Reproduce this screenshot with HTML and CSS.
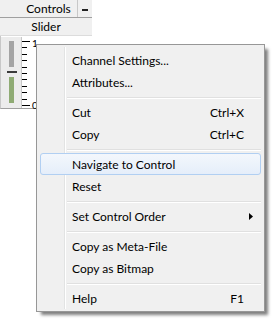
FILE: index.html
```html
<!DOCTYPE html>
<html>
<head>
<meta charset="utf-8">
<link rel="stylesheet" href="styles.css">
</head>
<body>
<div class="widget">
  <div class="titlebar">
    <div class="title">Controls</div>
    <div class="minbtn"><span class="dash"></span></div>
  </div>
  <div class="caption">Slider</div>
  <div class="body">
    <div class="track">
      <div class="bar upper"></div>
      <div class="thumb"></div>
      <div class="bar lower"></div>
    </div>
    <div class="ticks">
      <i class="long"></i><i></i><i></i><i></i><i></i><i></i><i></i><i></i><i></i><i></i><i class="long"></i>
    </div>
    <div class="labels"><span>1</span><span>0</span></div>
  </div>
</div>

<div class="menu">
  <div class="item"><span class="label">Channel Settings...</span></div>
  <div class="item"><span class="label">Attributes...</span></div>
  <div class="sep"></div>
  <div class="item"><span class="label">Cut</span><span class="key">Ctrl+X</span></div>
  <div class="item"><span class="label">Copy</span><span class="key">Ctrl+C</span></div>
  <div class="sep"></div>
  <div class="item hot"><span class="label">Navigate to Control</span></div>
  <div class="item"><span class="label">Reset</span></div>
  <div class="sep"></div>
  <div class="item"><span class="label">Set Control Order</span><span class="sub"><svg width="4" height="7" viewBox="0 0 4 7"><polygon points="0,0 4,3.5 0,7" fill="#000"/></svg></span></div>
  <div class="sep"></div>
  <div class="item"><span class="label">Copy as Meta-File</span></div>
  <div class="item"><span class="label">Copy as Bitmap</span></div>
  <div class="sep"></div>
  <div class="item"><span class="label">Help</span><span class="key">F1</span></div>
</div>
</body>
</html>
```

FILE: styles.css
```css
* { box-sizing: border-box; }
html, body { margin: 0; padding: 0; background: #fff; }
body {
  width: 273px;
  height: 320px;
  overflow: hidden;
  position: relative;
  font-family: Lato, "Liberation Sans", sans-serif;
  font-size: 12px;
  color: #000;
}

.widget { width: 92px; display: flex; flex-direction: column; }

.titlebar {
  display: flex;
  height: 18px;
  background: #f0f0f0;
  border-bottom: 1px solid #a0a0a0;
}
.title { flex: 1; text-align: center; line-height: 17px; padding-left: 20px; }
.minbtn {
  width: 15px;
  border-left: 1px solid #c8c8c8;
  display: flex;
  align-items: center;
  justify-content: center;
}
.dash { width: 6px; height: 2px; background: #222; margin-top: 3px; }

.caption {
  height: 18px;
  background: #f0f0f0;
  border-bottom: 1px solid #dcdcdc;
  text-align: center;
  line-height: 17px;
}

.body {
  display: flex;
  height: 73px;
  border-bottom: 1px solid #a0a0a0;
  border-left: 1px solid #c8c8c8;
}
.track {
  width: 21px;
  margin-top: 1px;
  background: #ececec;
  border-right: 1px solid #c8c8c8;
  padding: 4px 0 0 8px;
  display: flex;
  flex-direction: column;
}
.bar { width: 5px; height: 26px; }
.upper { background: #a4a4a4; }
.lower { background: #8fab74; }
.thumb { width: 10px; height: 2px; margin: 4px 0 4px -2px; background: #3a3a3a; }

.ticks {
  width: 10px;
  height: 65px;
  margin-top: 5px;
  display: flex;
  flex-direction: column;
  justify-content: space-between;
}
.ticks i { display: block; width: 5px; height: 1px; background: #000; }
.ticks i.long { width: 8px; }

.labels {
  height: 70px;
  margin-top: 3px;
  display: flex;
  flex-direction: column;
  justify-content: space-between;
  font-size: 10px;
  line-height: 8px;
}

.menu {
  position: absolute;
  left: 36px;
  top: 44px;
  width: 229px;
  border: 1px solid #979797;
  background: #f0f0f0;
  padding: 4px 3px 2px;
  box-shadow: 4px 4px 3px -1px rgba(0, 0, 0, 0.5);
}
.menu::before {
  content: "";
  position: absolute;
  left: 27px;
  top: 2px;
  bottom: 2px;
  width: 1px;
  background: #e2e3e3;
  box-shadow: 1px 0 #fff;
}
.item {
  position: relative;
  display: flex;
  align-items: center;
  height: 22px;
  padding: 0 16px 0 31px;
  border: 1px solid transparent;
  border-radius: 3px;
  white-space: nowrap;
}
.item.hot {
  background: linear-gradient(#f3f7fc, #e5eefa);
  border-color: #b1cff2;
}
.label { flex: 1; }
.key { margin-left: auto; }
.sub {
  width: 16px;
  margin-right: -16px;
  padding-left: 5px;
  display: flex;
  align-items: center;
}
.sep {
  position: relative;
  height: 1px;
  margin: 4px 0 3px 27px;
  background: #e0e0e0;
  box-shadow: 0 1px #fff;
}
```
